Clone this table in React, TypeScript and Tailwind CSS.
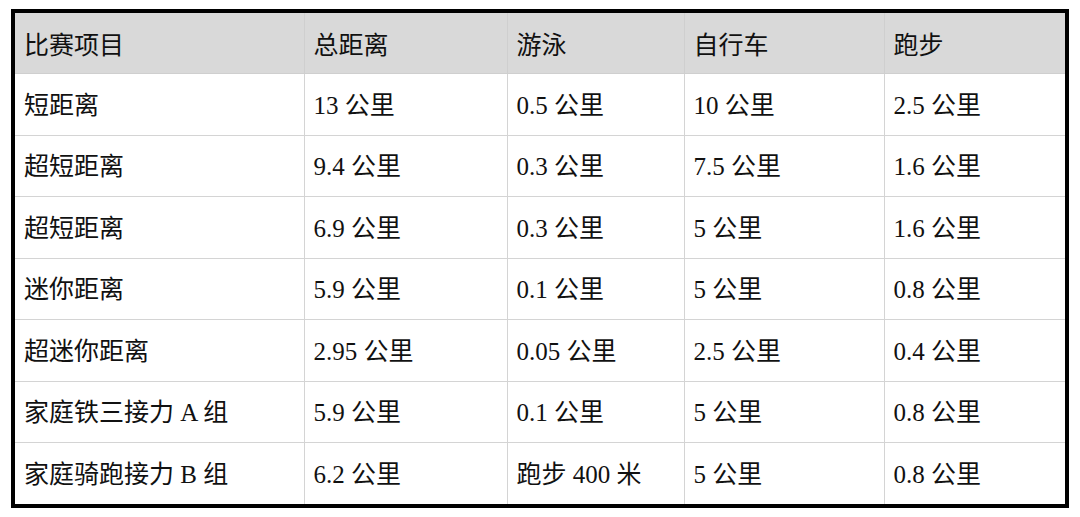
const headers = ["比赛项目", "总距离", "游泳", "自行车", "跑步"]

const rows = [
    ["短距离", "13 公里", "0.5 公里", "10 公里", "2.5 公里"],
    ["超短距离", "9.4 公里", "0.3 公里", "7.5 公里", "1.6 公里"],
    ["超短距离", "6.9 公里", "0.3 公里", "5 公里", "1.6 公里"],
    ["迷你距离", "5.9 公里", "0.1 公里", "5 公里", "0.8 公里"],
    ["超迷你距离", "2.95 公里", "0.05 公里", "2.5 公里", "0.4 公里"],
    ["家庭铁三接力 A 组", "5.9 公里", "0.1 公里", "5 公里", "0.8 公里"],
    ["家庭骑跑接力 B 组", "6.2 公里", "跑步 400 米", "5 公里", "0.8 公里"],
]

const colWidths = ["w-[289px]", "w-[203px]", "w-[177px]", "w-[200px]", "w-[181px]"]

export default function App() {
    return (
        <div className="w-[1080px] h-[517px] bg-white pt-[9px] pl-[11px]">
            <div className="w-[1058px] border-[4px] border-black bg-white">
                <table className="w-[1050px] table-fixed border-collapse text-[25px] text-[#111]">
                    <colgroup>
                        {colWidths.map((w, i) => (
                            <col key={i} className={w} />
                        ))}
                    </colgroup>
                    <thead>
                        <tr className="bg-[#d9d9d9]">
                            {headers.map((h, i) => (
                                <th
                                    key={h}
                                    className={`h-[60.5px] px-[9px] pt-[1px] text-left font-normal align-middle border-b border-[#cfcfcf] ${i > 0 ? "border-l" : ""} font-['Noto_Sans_CJK_SC',sans-serif]`}
                                >
                                    {h}
                                </th>
                            ))}
                        </tr>
                    </thead>
                    <tbody>
                        {rows.map((row, r) => (
                            <tr key={r}>
                                {row.map((cell, i) => (
                                    <td
                                        key={i}
                                        className={`h-[61.5px] px-[9px] pt-[2px] align-middle whitespace-nowrap border-[#d4d4d4] ${r < rows.length - 1 ? "border-b" : ""} ${i > 0 ? "border-l" : ""} font-['Liberation_Serif','Noto_Sans_CJK_SC',serif]`}
                                    >
                                        {cell}
                                    </td>
                                ))}
                            </tr>
                        ))}
                    </tbody>
                </table>
            </div>
        </div>
    )
}
